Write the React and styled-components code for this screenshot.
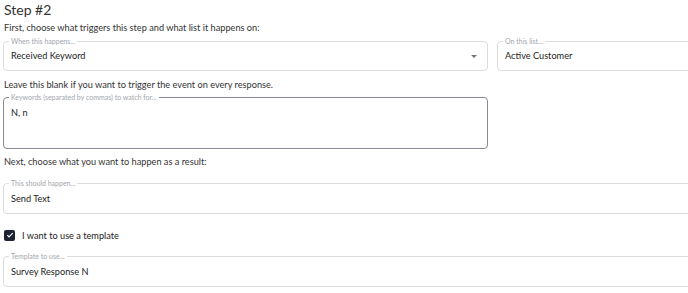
import React from 'react';
import styled, { createGlobalStyle } from 'styled-components';

const GlobalStyle = createGlobalStyle`
  body {
    margin: 0;
    background: #fff;
    overflow: hidden;
    font-family: "Lato", "Open Sans", sans-serif;
  }
`;

const Page = styled.div`
  width: 780px;
  padding: 0 3px;
  color: #333;
`;

const Title = styled.h2`
  margin: 0;
  padding: 1px 0 0 1px;
  font-size: 14px;
  font-weight: 400;
  line-height: 17px;
  color: #333;
`;

const Hint = styled.p`
  margin: ${(p) => p.$top || 0}px 0 0;
  padding-left: 1px;
  font-size: 9.2px;
  line-height: 14px;
  color: #333;
`;

const Row = styled.div`
  display: grid;
  grid-template-columns: 485px 1fr;
  gap: 9px;
`;

const Field = styled.div`
  position: relative;
  margin-top: ${(p) => p.$top || 0}px;
  height: ${(p) => p.$h || 30}px;
  box-sizing: border-box;
  padding: 0 7px;
  border: 1px solid ${(p) => (p.$dark ? '#868a92' : '#dcdcdc')};
  border-radius: 4px;
  display: flex;
  align-items: ${(p) => (p.$multi ? 'flex-start' : 'center')};
  justify-content: space-between;
`;

const Label = styled.span`
  position: absolute;
  top: -5px;
  left: 5px;
  padding: 0 2px;
  background: #fff;
  font-size: 7px;
  line-height: 8px;
  color: #a2a6ad;
`;

const Value = styled.span`
  padding-top: ${(p) => (p.$multi ? 9 : 0)}px;
  font-size: 9.2px;
  line-height: 12px;
  color: #222;
`;

const Caret = styled.span`
  width: 0;
  height: 0;
  margin-right: 3px;
  border-left: 3.5px solid transparent;
  border-right: 3.5px solid transparent;
  border-top: 3.5px solid #757575;
`;

const CheckRow = styled.label`
  display: flex;
  align-items: center;
  gap: 7px;
  margin-top: 14px;
  height: 14px;
  padding-left: 1px;
  font-size: 9.2px;
  color: #222;
`;

const Box = styled.span`
  width: 11px;
  height: 11px;
  border-radius: 2px;
  background: #1f2233;
  display: flex;
  align-items: center;
  justify-content: center;
`;

const SelectField = ({ label, value, caret, top, h }) => (
  <Field $top={top} $h={h}>
    <Label>{label}</Label>
    <Value>{value}</Value>
    {caret && <Caret />}
  </Field>
);

export default function App() {
  return (
    <Page>
      <GlobalStyle />
      <Title>Step #2</Title>
      <Hint $top={3}>First, choose what triggers this step and what list it happens on:</Hint>
      <Row>
        <SelectField label="When this happens..." value="Received Keyword" caret top={6} />
        <SelectField label="On this list..." value="Active Customer" top={6} />
      </Row>
      <Row>
        <div>
          <Hint $top={7}>Leave this blank if you want to trigger the event on every response.</Hint>
          <Field $dark $multi $h={52} $top={5}>
            <Label>Keywords (separated by commas) to watch for...</Label>
            <Value $multi>N, n</Value>
          </Field>
        </div>
      </Row>
      <Hint $top={6}>Next, choose what you want to happen as a result:</Hint>
      <SelectField label="This should happen..." value="Send Text" top={14} h={31} />
      <CheckRow>
        <Box>
          <svg width="8" height="8" viewBox="0 0 24 24">
            <path d="M4 12.5l5 5L20 6.5" fill="none" stroke="#fff" strokeWidth="3.5" />
          </svg>
        </Box>
        I want to use a template
      </CheckRow>
      <SelectField label="Template to use..." value="Survey Response N" top={14} h={31} />
    </Page>
  );
}
